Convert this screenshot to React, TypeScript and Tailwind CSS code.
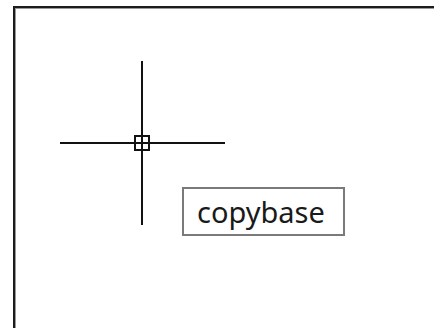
export default function App() {
  return (
    <div className="w-[434px] h-[328px] bg-white pt-[6px] pl-[13px] overflow-hidden">
      <div className="relative w-full h-full border-t-2 border-l-2 border-[#1c1c1c] shadow-[inset_1px_1px_0_#9a9a9a]">
        {/* crosshair cursor */}
        <svg
          className="absolute left-[43px] top-[51px]"
          width="170"
          height="170"
          viewBox="0 0 170 170"
        >
          <g stroke="#111" strokeWidth="2" fill="none" shapeRendering="crispEdges">
            <line x1="2" y1="84" x2="167" y2="84" />
            <line x1="84" y1="2" x2="84" y2="166" />
            <rect x="77" y="77" width="14" height="14" />
          </g>
        </svg>
        <div className="absolute left-[167px] top-[179px] w-[163px] h-[49px] border-2 border-[#7a7a7a] bg-white flex items-center pl-[13px] font-['Noto_Sans',sans-serif] text-[29px] leading-none text-[#1a1a1a]">
          copybase
        </div>
      </div>
    </div>
  );
}
